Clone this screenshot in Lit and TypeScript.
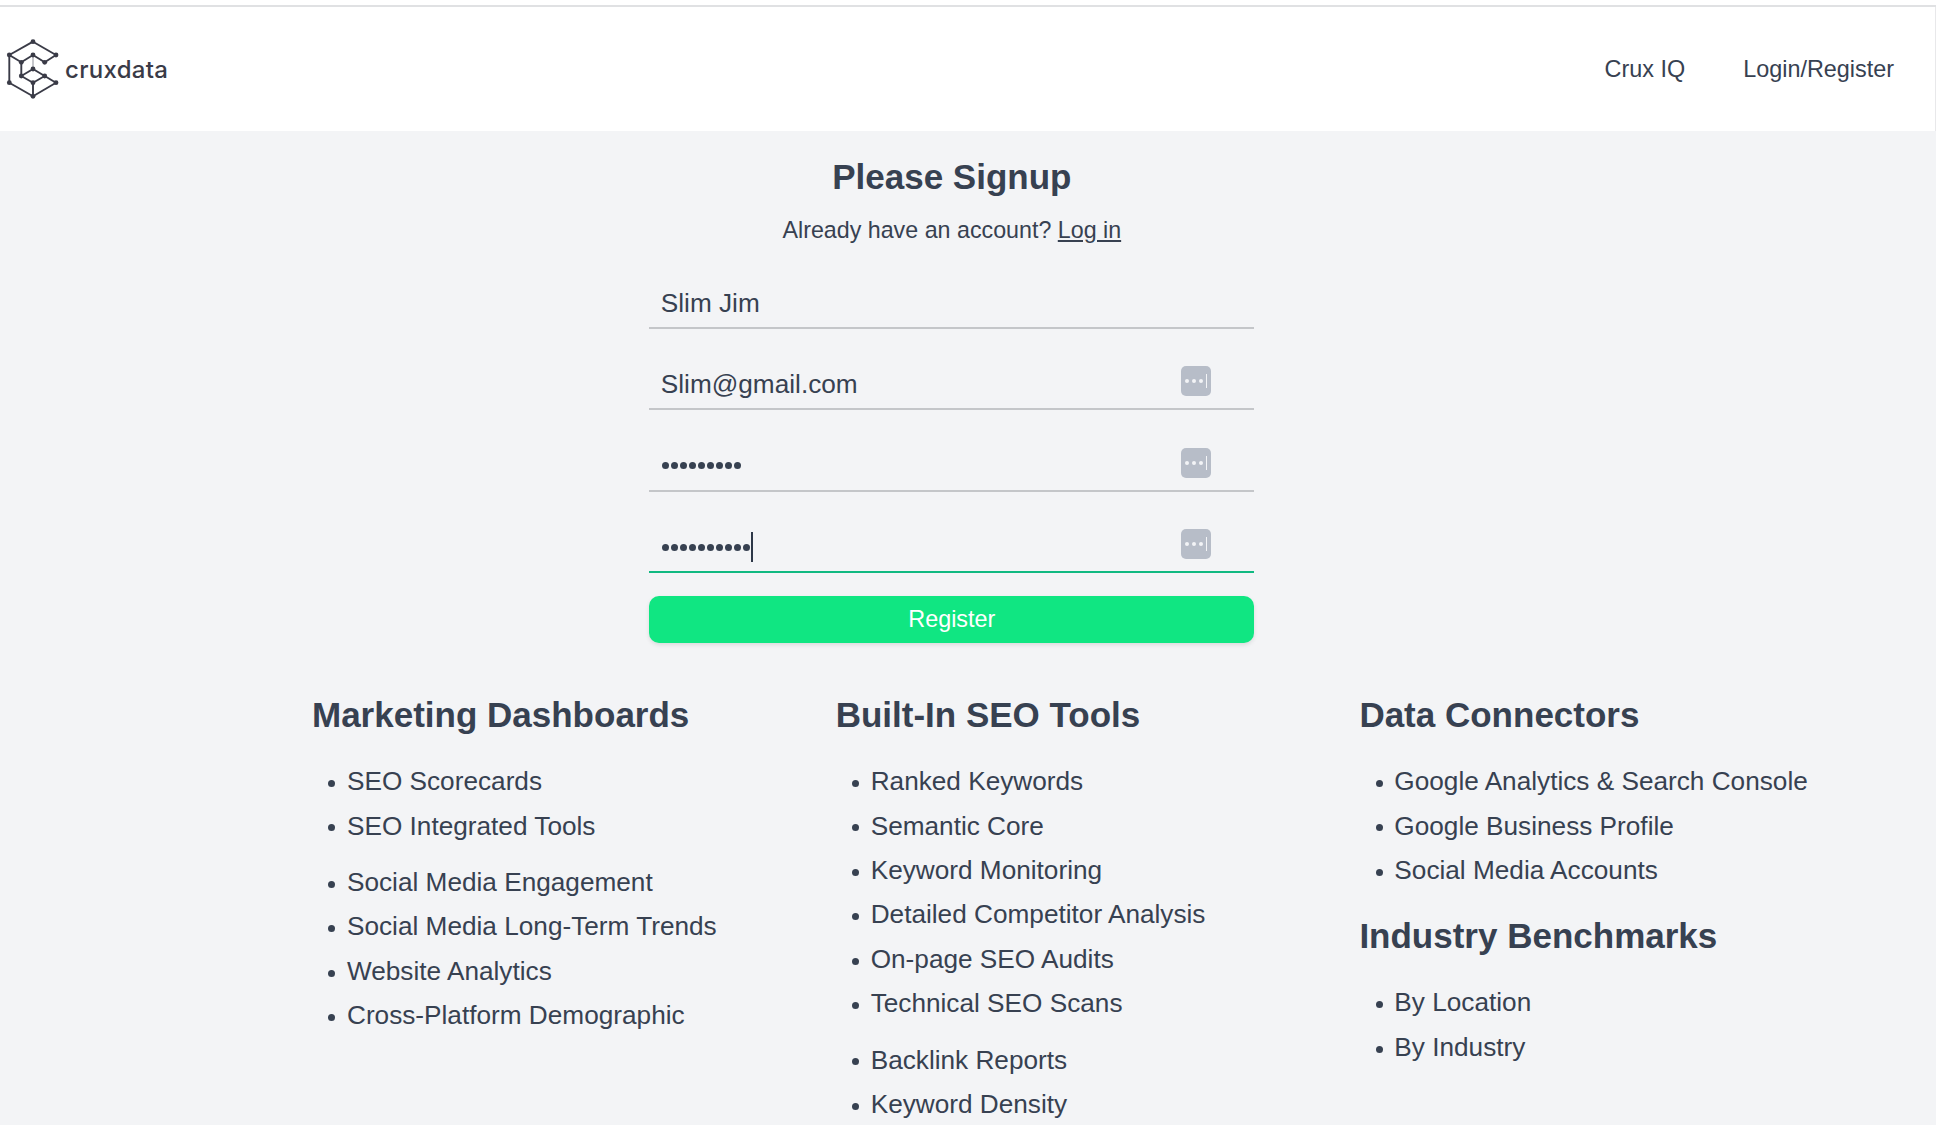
import { LitElement, html, css } from "lit";
import { customElement } from "lit/decorators.js";

const nodes: [number, number][] = [
  [33, 6.7], [56, 20], [9.3, 20], [9.3, 47.7], [33, 61.3], [56, 47.7],
  [21.3, 27.3], [33, 20], [44.7, 27.3], [21.3, 41], [33, 34], [44.7, 41], [33, 47.7],
];
const edges: [number, number][] = [
  [0, 1], [0, 2], [2, 3], [3, 4], [4, 5], [5, 11], [11, 10], [10, 9], [9, 12], [12, 11],
  [12, 4], [2, 6], [6, 9], [6, 7], [7, 8], [8, 1],
];

@customElement("app-root")
export class AppRoot extends LitElement {
  static styles = css`
    :host { display: block; background: #f3f4f6; font-family: "Liberation Sans", Arial, sans-serif; color: #374151; height: 1125px; overflow: hidden; }
    .topgap { height: 5px; background: #fff; border-bottom: 2px solid #e0e1e3; }
    header { height: 124px; background: #fff; display: flex; align-items: center; justify-content: space-between; padding: 0 41px 0 0; border-right: 1px solid #e8e8ea; }
    .brand { display: flex; align-items: center; gap: 5px; }
    .brand svg { display: block; width: 60px; height: 68px; }
    .wordmark { font-family: "Inter", sans-serif; font-size: 24px; font-weight: 500; color: #3a3b47; letter-spacing: 0.3px; }
    nav { display: flex; gap: 58px; font-size: 23.4px; color: #374151; }
    main { display: flex; flex-direction: column; align-items: center; padding-right: 32.4px; }
    h1 { margin: 23.5px 0 0; font-size: 35px; line-height: 44px; font-weight: 700; color: #374151; }
    .sub { margin-top: 16px; font-size: 23.25px; line-height: 30px; }
    .sub a { color: inherit; text-decoration: underline; }
    form { width: 605px; margin-top: 25.5px; display: flex; flex-direction: column; }
    .field { height: 48px; margin-bottom: 22.4px; border-bottom: 2px solid #c4c6c9; display: flex; align-items: center; justify-content: space-between; padding: 9px 43.5px 0 11.5px; font-size: 26.2px; }
    .field.focus { border-bottom-color: #10b981; margin-bottom: 23px; }
    .dots { display: flex; align-items: center; gap: 2px; height: 30px; margin-left: 1.5px; }
    .dot { width: 7px; height: 7px; border-radius: 50%; background: #374151; }
    .caret { width: 1.5px; height: 30px; background: #2d3748; margin-left: -1px; }
    .key { width: 30px; height: 30px; border-radius: 5px; background: #b7bdc8; display: flex; align-items: center; justify-content: center; gap: 3px; margin-top: -6px; }
    .key i { width: 4px; height: 4px; border-radius: 50%; background: #f3f4f6; display: block; }
    .key b { width: 1.5px; height: 14px; background: #f3f4f6; display: block; }
    button { height: 47px; border: 0; border-radius: 10px; background: #10e682; color: #fff; font: 23.4px "Liberation Sans", Arial, sans-serif; box-shadow: 0 2px 4px rgba(0,0,0,.1); padding: 0; }
    .cols { display: grid; grid-template-columns: repeat(3, 523.7px); margin: 0 0 0 312px; align-self: flex-start; padding-top: 49.5px; }
    h2 { margin: 0; font-size: 35px; line-height: 44px; font-weight: 700; color: #374151; }
    ul { margin: 22.5px 0 0; padding: 0 0 0 16.2px; font-size: 26.2px; list-style: none; }
    li { line-height: 44.4px; white-space: nowrap; display: flex; align-items: center; gap: 11.8px; }
    li::before { content: ""; width: 7px; height: 7px; border-radius: 50%; background: #374151; margin-top: 4px; flex: none; }
    li.gap { margin-top: 12px; }
    .second { margin-top: 21.5px; }
  `;

  logo() {
    return html`<svg viewBox="0 0 60 68" aria-hidden="true">
      ${edges.map(([a, b]) => html`<svg><line x1=${nodes[a][0]} y1=${nodes[a][1]} x2=${nodes[b][0]} y2=${nodes[b][1]} stroke="#3a3b47" stroke-width="1.9"/></svg>`)}
      <line x1="33" y1="20" x2="33" y2="34" stroke="#a0a1a8" stroke-width="1.2"/>
      ${nodes.map(([x, y]) => html`<svg><circle cx=${x} cy=${y} r="2.4" fill="#3a3b47"/></svg>`)}
    </svg>`;
  }

  list(items: string[], gaps: number[] = []) {
    return html`<ul>${items.map((t, i) => html`<li class=${gaps.includes(i) ? "gap" : ""}>${t}</li>`)}</ul>`;
  }

  key() {
    return html`<span class="key"><i></i><i></i><i></i><b></b></span>`;
  }

  dots(n: number) {
    return Array.from({ length: n }, () => html`<span class="dot"></span>`);
  }

  render() {
    return html`
      <div class="topgap"></div>
      <header>
        <div class="brand">${this.logo()}<span class="wordmark">cruxdata</span></div>
        <nav><span>Crux IQ</span><span>Login/Register</span></nav>
      </header>
      <main>
        <h1>Please Signup</h1>
        <div class="sub">Already have an account? <a href="#">Log in</a></div>
        <form>
          <div class="field"><span>Slim Jim</span></div>
          <div class="field"><span>Slim@gmail.com</span>${this.key()}</div>
          <div class="field"><span class="dots">${this.dots(9)}</span>${this.key()}</div>
          <div class="field focus"><span class="dots">${this.dots(10)}<span class="caret"></span></span>${this.key()}</div>
          <button type="button">Register</button>
        </form>
        <section class="cols">
          <div>
            <h2>Marketing Dashboards</h2>
            ${this.list(["SEO Scorecards", "SEO Integrated Tools", "Social Media Engagement", "Social Media Long-Term Trends", "Website Analytics", "Cross-Platform Demographic"], [2])}
          </div>
          <div>
            <h2>Built-In SEO Tools</h2>
            ${this.list(["Ranked Keywords", "Semantic Core", "Keyword Monitoring", "Detailed Competitor Analysis", "On-page SEO Audits", "Technical SEO Scans", "Backlink Reports", "Keyword Density"], [6])}
          </div>
          <div>
            <h2>Data Connectors</h2>
            ${this.list(["Google Analytics & Search Console", "Google Business Profile", "Social Media Accounts"])}
            <h2 class="second">Industry Benchmarks</h2>
            ${this.list(["By Location", "By Industry"])}
          </div>
        </section>
      </main>
    `;
  }
}
